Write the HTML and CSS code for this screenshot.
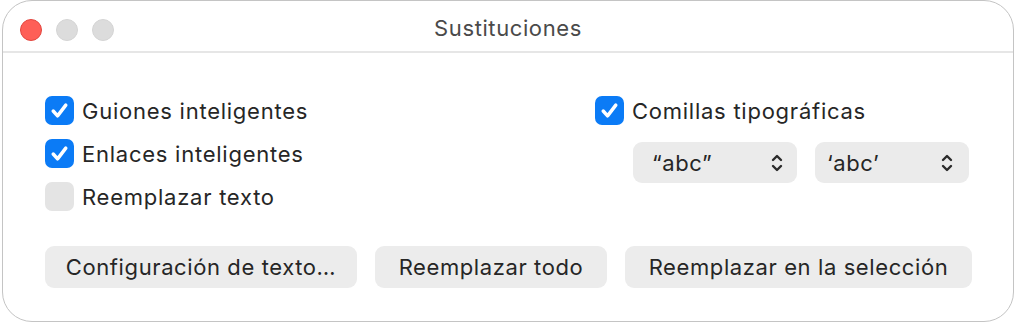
FILE: index.html
```html
<!DOCTYPE html>
<html lang="es">
<head>
<meta charset="utf-8">
<title>Sustituciones</title>
<link rel="stylesheet" href="styles.css">
</head>
<body>
<div class="window">
  <div class="titlebar">
    <div class="lights">
      <span class="light close"></span>
      <span class="light"></span>
      <span class="light"></span>
    </div>
    <div class="title">Sustituciones</div>
    <div class="spacer"></div>
  </div>
  <div class="content">
    <div class="columns">
      <div class="col-left">
        <label class="check-row">
          <span class="box on"><svg viewBox="0 0 30 30"><path d="M8.5 15.5 L13 20.5 L21.5 9.5"/></svg></span>
          <span class="label">Guiones inteligentes</span>
        </label>
        <label class="check-row">
          <span class="box on"><svg viewBox="0 0 30 30"><path d="M8.5 15.5 L13 20.5 L21.5 9.5"/></svg></span>
          <span class="label">Enlaces inteligentes</span>
        </label>
        <label class="check-row">
          <span class="box"></span>
          <span class="label">Reemplazar texto</span>
        </label>
      </div>
      <div class="col-right">
        <label class="check-row">
          <span class="box on"><svg viewBox="0 0 30 30"><path d="M8.5 15.5 L13 20.5 L21.5 9.5"/></svg></span>
          <span class="label">Comillas tipográficas</span>
        </label>
        <div class="popups">
          <div class="popup wide">
            <span class="popup-text">“abc”</span>
            <svg class="chev" viewBox="0 0 12 20"><path d="M2 7 L6 3 L10 7 M2 13 L6 17 L10 13"/></svg>
          </div>
          <div class="popup narrow">
            <span class="popup-text">‘abc’</span>
            <svg class="chev" viewBox="0 0 12 20"><path d="M2 7 L6 3 L10 7 M2 13 L6 17 L10 13"/></svg>
          </div>
        </div>
      </div>
    </div>
    <div class="buttons">
      <button class="btn b1">Configuración de texto…</button>
      <button class="btn b2">Reemplazar todo</button>
      <button class="btn b3">Reemplazar en la selección</button>
    </div>
  </div>
</div>
</body>
</html>
```

FILE: styles.css
```css
* { box-sizing: border-box; }
html, body { margin: 0; padding: 0; background: #ffffff; }
body {
  font-family: Inter, "Noto Sans", "Liberation Sans", sans-serif;
  color: #262626;
}
.window {
  margin: 0 0 0 2px;
  width: 1012px;
  height: 322px;
  border: 1.5px solid #c4c4c4;
  border-radius: 30px;
  background: #ffffff;
  overflow: hidden;
}
.titlebar {
  height: 52px;
  border-bottom: 2px solid #e6e6e6;
  display: grid;
  grid-template-columns: 1fr auto 1fr;
  align-items: center;
  padding-top: 7px;
}
.lights {
  display: flex;
  gap: 14px;
  padding-left: 17px;
}
.light {
  width: 22px;
  height: 22px;
  border-radius: 50%;
  background: #dcdcdc;
  border: 1px solid #d4d4d4;
}
.light.close {
  background: #fe5f57;
  border-color: #e2463f;
}
.title {
  font-size: 22px;
  color: #4a4a4a;
  letter-spacing: 0.6px;
  padding-bottom: 3px;
}
.content {
  padding: 36px 0 0 42px;
}
.columns {
  display: flex;
}
.col-left {
  width: 550px;
  display: flex;
  flex-direction: column;
}
.col-right {
  display: flex;
  flex-direction: column;
}
.check-row {
  height: 43px;
  display: flex;
  align-items: center;
  gap: 8px;
}
.box {
  width: 29px;
  height: 29px;
  border-radius: 7px;
  background: #e4e4e4;
  display: flex;
  align-items: center;
  justify-content: center;
  flex-shrink: 0;
}
.box.on { background: #0b7bf6; }
.box svg { width: 29px; height: 29px; }
.box path {
  fill: none;
  stroke: #ffffff;
  stroke-width: 3.6;
  stroke-linecap: round;
  stroke-linejoin: round;
}
.label {
  font-size: 22px;
  letter-spacing: 0.75px;
}
.popups {
  display: flex;
  gap: 18px;
  margin: 10px 0 0 38px;
}
.popup {
  height: 41px;
  border-radius: 9px;
  background: #ebebeb;
  display: flex;
  align-items: center;
  justify-content: space-between;
  padding: 0 14px 0 19px;
  font-size: 22px;
  letter-spacing: 0.6px;
}
.popup.wide { width: 164px; }
.popup.narrow { width: 154px; padding-left: 12px; padding-right: 16px; }
.chev { width: 12px; height: 20px; }
.chev path {
  fill: none;
  stroke: #2b2b2b;
  stroke-width: 2.4;
  stroke-linecap: round;
  stroke-linejoin: round;
}
.buttons {
  display: flex;
  gap: 18px;
  margin-top: 28px;
}
.btn {
  height: 42px;
  border: none;
  border-radius: 9px;
  background: #ececec;
  font-family: Inter, "Noto Sans", "Liberation Sans", sans-serif;
  font-size: 22px;
  color: #262626;
  padding: 0;
  letter-spacing: 0.6px;
}
.b1 { width: 312px; }
.b2 { width: 232px; }
.b3 { width: 347px; }
```
